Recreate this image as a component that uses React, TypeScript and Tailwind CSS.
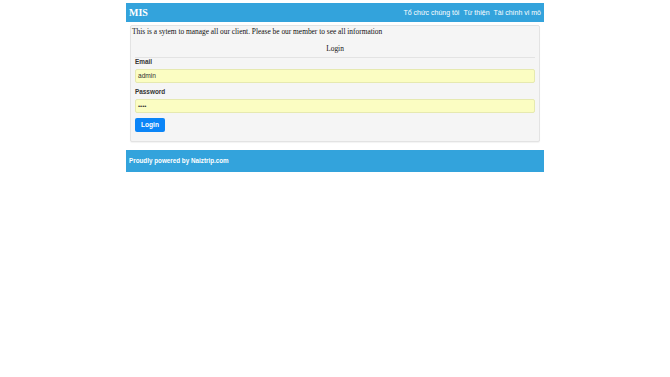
import React from "react";

export default function App() {
  const serif = { fontFamily: '"Liberation Serif", "DejaVu Serif", serif' };
  return (
    <div className="min-h-[377px] w-full bg-white" style={{ fontFamily: '"Liberation Sans", Arial, sans-serif' }}>
      <div className="mx-auto w-[418px] pt-[3px]">
        <div className="flex h-[19px] items-center justify-between bg-[#33a3dc] pl-[3px] pr-[3px] text-white">
          <span className="text-[10px] font-bold leading-none" style={serif}>MIS</span>
          <nav className="flex gap-[4px] text-[7px] leading-none">
            <span>Tổ chức chúng tôi</span>
            <span>Từ thiện</span>
            <span>Tài chính vi mô</span>
          </nav>
        </div>

        <div className="mx-[4px] mt-[3px] rounded-[2px] border border-[#e3e3e3] bg-[#f5f5f5] pb-[9px] shadow-[0_1px_1px_rgba(0,0,0,0.05)]">
          <p className="px-[1px] pt-[1px] text-[7.4px] leading-[10px] text-[#111]" style={serif}>
            This is a sytem to manage all our client. Please be our member to see all information
          </p>
          <div className="mx-[4px] mt-[3px] border-b border-[#e3e3e3] pb-[3px] pt-[4px] text-center text-[7.4px] leading-[10px] text-[#111]" style={serif}>
            Login
          </div>
          <div className="px-[4px]">
            <label className="block text-[6.4px] font-bold leading-[8px] text-[#333]">Email</label>
            <div className="mt-[3px] flex h-[14px] items-center rounded-[2px] border border-[#e6e9b0] bg-[#fbfdc2] px-[2px] text-[6.6px] text-[#333]">
              admin
            </div>
            <label className="mt-[5px] block text-[6.4px] font-bold leading-[8px] text-[#333]">Password</label>
            <div className="mt-[3px] flex h-[14px] items-center rounded-[2px] border border-[#e6e9b0] bg-[#fbfdc2] px-[2px] text-[6px] leading-none text-[#333]">
              ••••
            </div>
            <button className="mt-[5px] flex h-[14px] w-[30px] items-center justify-center rounded-[2px] bg-[#0b85f7] text-[6.6px] font-bold text-white">
              Login
            </button>
          </div>
        </div>

        <div className="mt-[8px] flex h-[22px] items-center bg-[#33a3dc] px-[3px] text-[6.3px] font-bold text-white">
          Proudly powered by Naiztrip.com
        </div>
      </div>
    </div>
  );
}
